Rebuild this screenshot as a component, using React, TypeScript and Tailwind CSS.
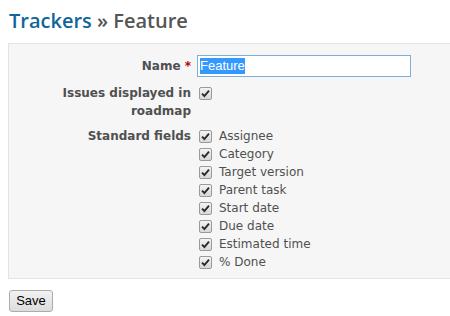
import React from "react";

const fields = [
  "Assignee",
  "Category",
  "Target version",
  "Parent task",
  "Start date",
  "Due date",
  "Estimated time",
  "% Done",
];

const CheckBox = () => (
  <span className="inline-flex h-[13px] w-[13px] shrink-0 items-center justify-center rounded-[2px] border border-[#9a9a9a] bg-gradient-to-b from-[#f4f4f4] to-[#d8d8d8]">
    <svg width="9" height="9" viewBox="0 0 9 9">
      <path d="M1 4.6 L3.4 7 L8 1.6" fill="none" stroke="#2b2b2b" strokeWidth="1.9" />
    </svg>
  </span>
);

export default function App() {
  return (
    <div className="h-[316px] w-[450px] overflow-hidden bg-white font-['DejaVu_Sans',Verdana,sans-serif] text-[12px] text-[#505050]">
      <h2 className="pl-[9px] pt-[7px] pb-[9px] font-['Open_Sans',sans-serif] text-[20px] font-semibold leading-[27px] text-[#555]">
        <span className="text-[#169]">Trackers</span> » Feature
      </h2>

      <div className="ml-[8px] w-[460px] border border-[#e4e4e4] bg-[#f6f6f6] pt-[11px] pb-[7px]">
        {/* name */}
        <div className="flex h-[22px] items-center">
          <div className="w-[182px] text-right font-bold">
            Name <span className="text-[#bb0000]">*</span>
          </div>
          <div className="ml-[6px] flex h-[22px] w-[214px] items-center border border-[#7eadd9] bg-white px-[2px] font-['Liberation_Sans',Arial,sans-serif] text-[13px] text-black">
            <span className="bg-[#3399ff] leading-[16px] text-white">Feature</span>
          </div>
        </div>

        {/* roadmap */}
        <div className="mt-[7px] flex">
          <div className="w-[182px] text-right font-bold leading-[18px]">
            Issues displayed in
            <br />
            roadmap
          </div>
          <div className="ml-[8px] flex h-[18px] items-center">
            <CheckBox />
          </div>
        </div>

        {/* standard fields */}
        <div className="mt-[7px] flex">
          <div className="w-[182px] text-right font-bold leading-[18px]">Standard fields</div>
          <div className="ml-[8px] flex flex-col">
            {fields.map((f) => (
              <label key={f} className="flex h-[18px] items-center gap-[7px]">
                <CheckBox />
                <span className="text-[#505050]">{f}</span>
              </label>
            ))}
          </div>
        </div>
      </div>

      <button className="ml-[9px] mt-[11px] h-[22px] w-[44px] rounded-[3px] border border-[#acacac] bg-gradient-to-b from-[#f2f2f2] to-[#dddddd] font-['Liberation_Sans',Arial,sans-serif] text-[13px] text-black">
        Save
      </button>
    </div>
  );
}
